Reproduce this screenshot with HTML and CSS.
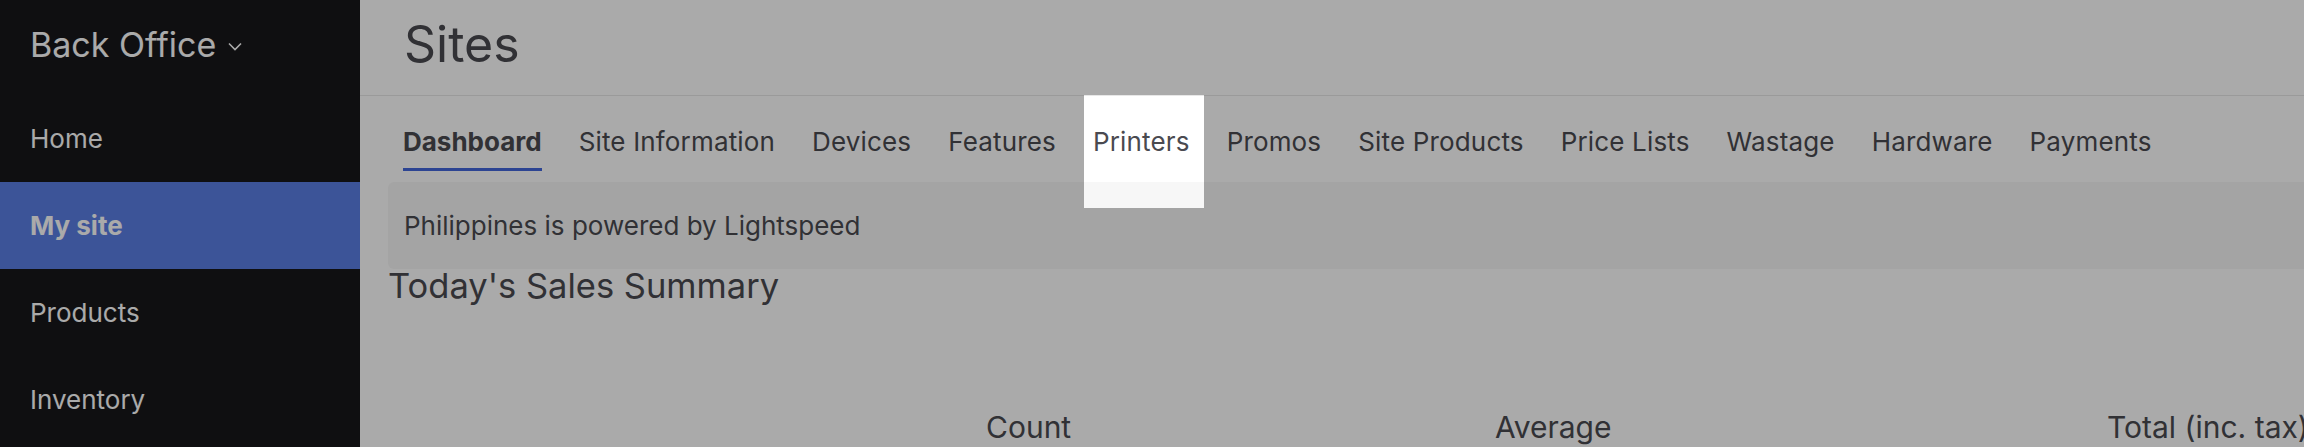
FILE: index.html
```html
<!DOCTYPE html>
<html lang="en">
<head>
    <meta charset="UTF-8">
    <meta name="viewport" content="width=device-width, initial-scale=1.0">
    <title>Sites - Back Office</title>
    <link rel="stylesheet" href="styles.css">
</head>
<body>

    <aside class="sidebar">
        <div class="brand">
            Back Office
            <svg class="chevron" width="14" height="9" viewBox="0 0 14 9">
                <path d="M1 1.5 L7 7.5 L13 1.5" fill="none" stroke="currentColor" stroke-width="1.6"/>
            </svg>
        </div>
        <ul class="side-nav">
            <li>Home</li>
            <li class="active">My site</li>
            <li>Products</li>
            <li>Inventory</li>
        </ul>
    </aside>

    <main class="content">
        <header class="page-header">
            <h1>Sites</h1>
        </header>

        <nav class="tabs">
            <a class="tab active">Dashboard</a>
            <a class="tab">Site Information</a>
            <a class="tab">Devices</a>
            <a class="tab">Features</a>
            <a class="tab">Printers</a>
            <a class="tab">Promos</a>
            <a class="tab">Site Products</a>
            <a class="tab">Price Lists</a>
            <a class="tab">Wastage</a>
            <a class="tab">Hardware</a>
            <a class="tab">Payments</a>
        </nav>

        <div class="notice">Philippines is powered by Lightspeed</div>

        <h2 class="summary-title">Today's Sales Summary</h2>

        <div class="summary-head">
            <span></span>
            <span>Count</span>
            <span>Average</span>
            <span>Total (inc. tax)</span>
        </div>
    </main>

    <!-- guided tour highlight over the Printers tab -->
    <div class="tour-spot"></div>

</body>
</html>
```

FILE: styles.css
```css
* {
    box-sizing: border-box;
}
body {
    margin: 0;
    height: 447px;
    overflow: hidden;
    display: flex;
    font-family: Inter, "Noto Sans", sans-serif;
    color: #4a4a50;
    background-color: #fff;
}

/* sidebar */
.sidebar {
    width: 360px;
    flex-shrink: 0;
    background-color: #17171a;
    color: #fff;
}
.brand {
    height: 95px;
    padding-left: 30px;
    padding-bottom: 6px;
    display: flex;
    align-items: center;
    gap: 12px;
    font-size: 34px;
}
.chevron {
    margin-top: 4px;
}
.side-nav {
    list-style: none;
    margin: 0;
    padding: 0;
}
.side-nav li {
    height: 87px;
    padding-left: 30px;
    display: flex;
    align-items: center;
    font-size: 26px;
}
.side-nav li.active {
    background-color: #5a7ee5;
    font-weight: 700;
}

/* main */
.content {
    flex: 1;
    min-width: 0;
    white-space: nowrap;
}
.page-header {
    height: 96px;
    padding-left: 44px;
    padding-bottom: 8px;
    border-bottom: 1px solid #e7e7e7;
    display: flex;
    align-items: center;
}
.page-header h1 {
    margin: 0;
    font-size: 50px;
    font-weight: 400;
    color: #4a4a50;
}
.tabs {
    display: flex;
    gap: 37px;
    height: 75px;
    padding-left: 43px;
    margin-bottom: 11px;
}
.tab {
    display: flex;
    align-items: flex-end;
    padding-bottom: 11px;
    font-size: 26px;
    letter-spacing: 0.16px;
    border-bottom: 3px solid transparent;
}
.tab.active {
    font-weight: 700;
    letter-spacing: 0;
    border-bottom-color: #4266db;
}
.notice {
    margin-left: 28px;
    height: 87px;
    padding-left: 16px;
    display: flex;
    align-items: center;
    background-color: #f7f7f7;
    border-radius: 6px 0 0 6px;
    font-size: 26px;
}
.summary-title {
    margin: -4px 0 0 28px;
    font-size: 34.5px;
    font-weight: 400;
    line-height: 42px;
}
.summary-head {
    display: grid;
    grid-template-columns: 598px 509px 612px auto;
    margin: 102px 0 0 28px;
    font-size: 30px;
}

/* tour overlay */
.tour-spot {
    position: absolute;
    left: 1084px;
    top: 95px;
    width: 120px;
    height: 113px;
    box-shadow: 0 0 0 4000px rgba(0, 0, 0, 0.333);
    pointer-events: none;
}
```
